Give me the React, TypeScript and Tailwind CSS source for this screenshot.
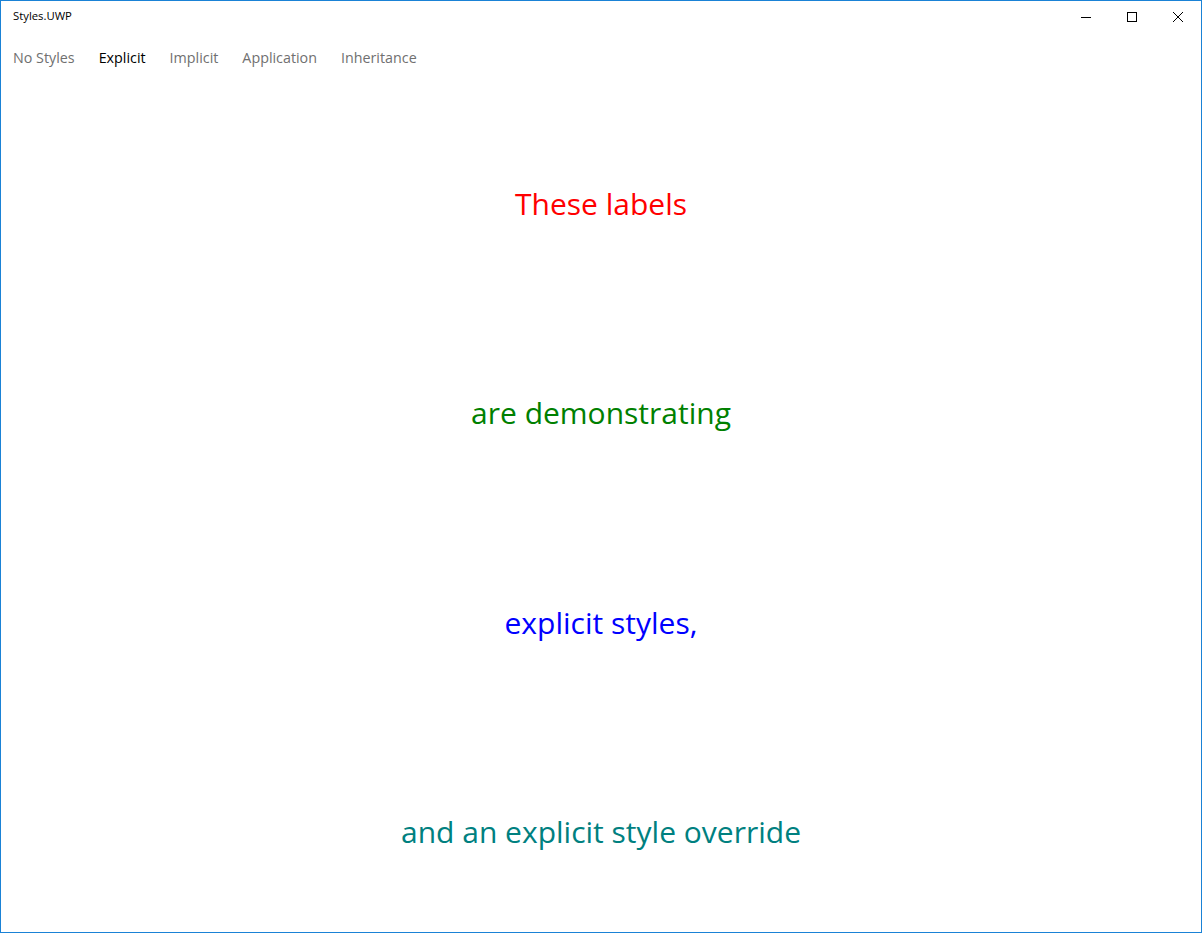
import React from 'react';

const tabs = ['No Styles', 'Explicit', 'Implicit', 'Application', 'Inheritance'];

const labels = [
  { text: 'These labels', color: 'text-[#ff0000]' },
  { text: 'are demonstrating', color: 'text-[#008000]' },
  { text: 'explicit styles,', color: 'text-[#0000ff]' },
  { text: 'and an explicit style override', color: 'text-[#008080]' },
];

const font = { fontFamily: '"Open Sans", "Noto Sans", sans-serif' };

export default function App() {
  return (
    <div
      className="w-[1202px] h-[933px] bg-white border border-[#1a82d6] flex flex-col overflow-hidden"
      style={font}
    >
      {/* Title bar */}
      <div className="h-[31px] flex items-start justify-between shrink-0">
        <div className="pl-[12px] pt-[7px] text-[11.3px] leading-[16px] text-black">Styles.UWP</div>
        <div className="flex">
          <div className="w-[46px] h-[31px] flex items-center justify-center">
            <svg width="10" height="10" viewBox="0 0 10 10">
              <path d="M0 5.5h10" stroke="#000" strokeWidth="1" />
            </svg>
          </div>
          <div className="w-[46px] h-[31px] flex items-center justify-center">
            <svg width="10" height="10" viewBox="0 0 10 10">
              <rect x="0.5" y="0.5" width="9" height="9" fill="none" stroke="#000" strokeWidth="1" />
            </svg>
          </div>
          <div className="w-[46px] h-[31px] flex items-center justify-center">
            <svg width="10" height="10" viewBox="0 0 10 10">
              <path d="M0 0L10 10M10 0L0 10" stroke="#000" strokeWidth="1" />
            </svg>
          </div>
        </div>
      </div>

      {/* Pivot headers */}
      <div className="h-[48px] flex items-center gap-[24px] pl-[12px] pt-[3px] shrink-0">
        {tabs.map((t) => (
          <span
            key={t}
            className={`text-[14.3px] ${t === 'Explicit' ? 'text-black' : 'text-[#707070]'}`}
          >
            {t}
          </span>
        ))}
      </div>

      {/* Labels */}
      <div className="flex flex-col pt-[19px]">
        {labels.map((l) => (
          <div key={l.text} className="h-[209.5px] flex items-center justify-center shrink-0">
            <span className={`text-[30px] leading-none ${l.color}`}>{l.text}</span>
          </div>
        ))}
      </div>
    </div>
  );
}
